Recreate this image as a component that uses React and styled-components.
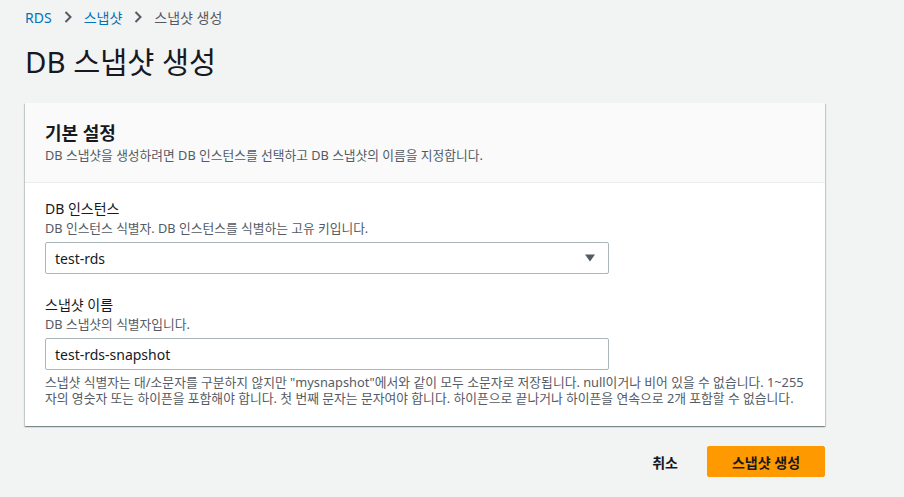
import React from 'react';
import styled, { createGlobalStyle } from 'styled-components';

const GlobalStyle = createGlobalStyle`
  body {
    margin: 0;
    background: #f2f3f3;
    font-family: 'Noto Sans', 'Noto Sans CJK KR', sans-serif;
    color: #16191f;
  }
`

const Page = styled.div`
  padding: 6px 79px 0 25px;
`

const Breadcrumbs = styled.nav`
  display: flex;
  align-items: center;
  gap: 11px;
  font-size: 14px;
  height: 22px;
`

const Crumb = styled.a`
  color: ${ p => p.current ? '#545b64' : '#0073bb' };
  text-decoration: none;
`

const Chevron = () => (
  <svg width="10" height="14" viewBox="0 0 10 14">
    <path d="M2.5 2 L7.5 7 L2.5 12" fill="none" stroke="#545b64" strokeWidth="2" />
  </svg>
)

const Title = styled.h1`
  margin: 16px 0 0 0;
  font-size: 29.4px;
  font-weight: 400;
  line-height: 36px;
`

const Card = styled.section`
  margin-top: 23px;
  width: 800px;
  background: white;
  box-shadow: 0 1px 1px 0 rgba(0, 28, 36, 0.3), 1px 1px 1px 0 rgba(0, 28, 36, 0.15), -1px 1px 1px 0 rgba(0, 28, 36, 0.15);
`

const CardHeader = styled.header`
  background: #fafafa;
  border-bottom: 1px solid #eaeded;
  padding: 17px 20px 19px 20px;
`

const CardTitle = styled.h2`
  margin: 0;
  font-size: 18px;
  font-weight: 700;
  line-height: 26px;
`

const CardDesc = styled.p`
  margin: 1px 0 0 0;
  font-size: 12.75px;
  line-height: 16px;
  color: #545b64;
`

const CardBody = styled.div`
  padding: 15px 20px 20px 20px;
  display: flex;
  flex-direction: column;
  gap: 20px;
`

const Field = styled.div`
  display: flex;
  flex-direction: column;
`

const Label = styled.label`
  font-size: 14px;
  line-height: 22px;
`

const Hint = styled.div`
  font-size: ${ p => p.after ? '12.8px' : '12.75px' };
  line-height: ${ p => p.after ? '16px' : '17px' };
  color: #545b64;
  margin-bottom: ${ p => p.after ? '0' : '5px' };
  margin-top: ${ p => p.after ? '4px' : '0' };
  white-space: ${ p => p.after ? 'nowrap' : 'normal' };
`

const Box = styled.div`
  width: 564px;
  height: 32px;
  box-sizing: border-box;
  border: 1px solid #aab7b8;
  border-radius: 2px;
  display: flex;
  align-items: center;
  justify-content: space-between;
  padding: 0 12px 0 9px;
  font-size: 14px;
`

const Caret = () => (
  <svg width="12" height="8" viewBox="0 0 12 8">
    <path d="M1 0.5 H11 L6 7.5 Z" fill="#545b64" />
  </svg>
)

const Actions = styled.div`
  width: 800px;
  display: flex;
  justify-content: flex-end;
  align-items: center;
  gap: 13px;
  margin-top: 20px;
`

const Button = styled.button`
  font-family: inherit;
  font-size: 14px;
  font-weight: 700;
  height: 31px;
  border-radius: 2px;
  cursor: pointer;
  color: #16191f;
  border: 1px solid ${ p => p.primary ? '#ff9900' : 'transparent' };
  background: ${ p => p.primary ? '#ff9900' : 'transparent' };
  padding: ${ p => p.primary ? '0 22px' : '0 15px' };
  width: ${ p => p.primary ? '118px' : 'auto' };
`

export default function App() {
  return (
    <Page>
      <GlobalStyle />
      <Breadcrumbs>
        <Crumb href="#">RDS</Crumb>
        <Chevron />
        <Crumb href="#">스냅샷</Crumb>
        <Chevron />
        <Crumb current>스냅샷 생성</Crumb>
      </Breadcrumbs>
      <Title>DB 스냅샷 생성</Title>
      <Card>
        <CardHeader>
          <CardTitle>기본 설정</CardTitle>
          <CardDesc>DB 스냅샷을 생성하려면 DB 인스턴스를 선택하고 DB 스냅샷의 이름을 지정합니다.</CardDesc>
        </CardHeader>
        <CardBody>
          <Field>
            <Label>DB 인스턴스</Label>
            <Hint>DB 인스턴스 식별자. DB 인스턴스를 식별하는 고유 키입니다.</Hint>
            <Box>
              <span>test-rds</span>
              <Caret />
            </Box>
          </Field>
          <Field>
            <Label>스냅샷 이름</Label>
            <Hint>DB 스냅샷의 식별자입니다.</Hint>
            <Box>test-rds-snapshot</Box>
            <Hint after>
              스냅샷 식별자는 대/소문자를 구분하지 않지만 "mysnapshot"에서와 같이 모두 소문자로 저장됩니다. null이거나 비어 있을 수 없습니다. 1~255<br />
              자의 영숫자 또는 하이픈을 포함해야 합니다. 첫 번째 문자는 문자여야 합니다. 하이픈으로 끝나거나 하이픈을 연속으로 2개 포함할 수 없습니다.
            </Hint>
          </Field>
        </CardBody>
      </Card>
      <Actions>
        <Button>취소</Button>
        <Button primary>스냅샷 생성</Button>
      </Actions>
    </Page>
  )
}
